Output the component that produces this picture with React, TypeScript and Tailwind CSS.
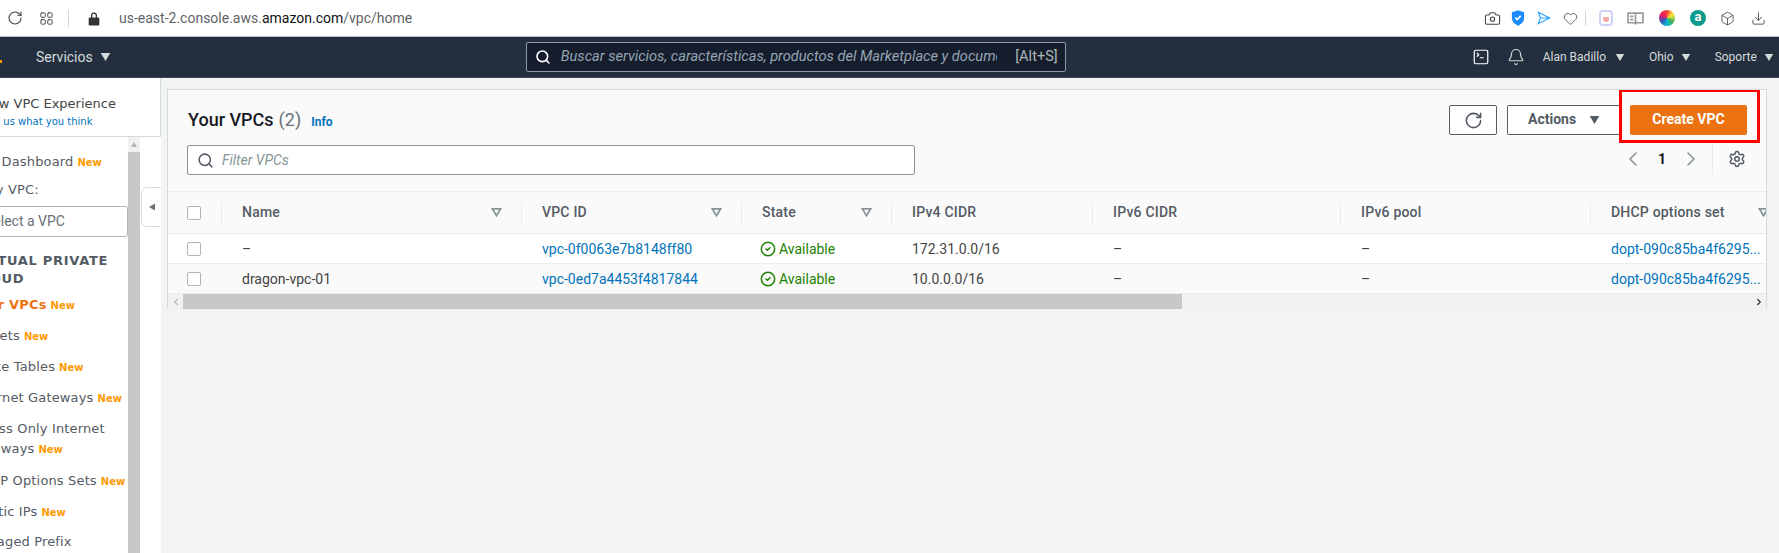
import React from 'react';
import {
  Bell,
  Box,
  Camera,
  ChevronLeft,
  ChevronRight,
  CircleCheck,
  Download,
  Heart,
  LayoutGrid,
  RotateCw,
  Search,
  Settings,
  SquareTerminal,
} from 'lucide-react';

const Tri: React.FC<{ className?: string }> = ({ className }) => (
  <svg viewBox="0 0 12 10" className={className} fill="currentColor">
    <path d="M0 0h12L6 10z" />
  </svg>
);

const SortIcon: React.FC = () => (
  <svg viewBox="0 0 12 10" className="w-[11px] h-[9px] text-[#879596] shrink-0" fill="none" stroke="currentColor" strokeWidth="2">
    <path d="M1.5 1h9L6 8.5z" />
  </svg>
);

const Check: React.FC = () => (
  <span className="block w-[14px] h-[14px] rounded-[2px] border border-[#aab7b8] bg-white" />
);

const New: React.FC = () => (
  <span className="ml-1 text-[10px] font-bold text-[#ff9900] tracking-normal">New</span>
);

const columns = [
  { label: 'Name', sort: true },
  { label: 'VPC ID', sort: true },
  { label: 'State', sort: true },
  { label: 'IPv4 CIDR', sort: false },
  { label: 'IPv6 CIDR', sort: false },
  { label: 'IPv6 pool', sort: false },
  { label: 'DHCP options set', sort: true },
];

const rows = [
  { name: '–', id: 'vpc-0f0063e7b8148ff80', cidr: '172.31.0.0/16', bg: 'bg-white' },
  { name: 'dragon-vpc-01', id: 'vpc-0ed7a4453f4817844', cidr: '10.0.0.0/16', bg: 'bg-[#fafafa]' },
];

const gridCols = 'grid grid-cols-[54px_300px_220px_150px_201px_248px_250px_198px]';

const Sidebar: React.FC = () => (
  <aside className="w-[161px] shrink-0 bg-white flex flex-col overflow-hidden h-[476px] font-['DejaVu_Sans',sans-serif] text-[#545b64]">
    <div className="h-[59px] shrink-0 border-b border-r border-[#d5dbdb] overflow-hidden pt-[16px]">
      <div className="-ml-[19px] whitespace-nowrap text-[13px] leading-[20px] text-[#444]">New VPC Experience</div>
      <div className="-ml-[16px] whitespace-nowrap text-[10px] leading-[16px] text-[#0073bb]">Tell us what you think</div>
    </div>
    <div className="flex flex-1 min-h-0 relative">
      <div className="w-[128px] shrink-0 overflow-hidden text-[13px] tracking-[0.15px]">
        <div className="-ml-[29px] w-[157px] pt-[15px]">
          <div className="h-[20px] leading-[20px] whitespace-nowrap">VPC Dashboard<New /></div>
          <div className="mt-[8px] -ml-[21px] h-[20px] leading-[20px] whitespace-nowrap">Filter by VPC:</div>
          <div className="mt-[6px] h-[31px] w-[157px] border border-[#aab7b8] rounded-[3px] pl-[13px] leading-[28px] text-[#687078] font-['Roboto',sans-serif] text-[14px] tracking-normal">Select a VPC</div>
          <div className="mt-[15px] leading-[18px] font-bold tracking-[0.7px] text-[#545b64]">VIRTUAL PRIVATE CLOUD</div>
          <div className="mt-[7px] h-[20px] leading-[20px] whitespace-nowrap font-bold text-[#ec7211]">Your VPCs<New /></div>
          <div className="mt-[11px] -ml-[5px] h-[20px] leading-[20px] whitespace-nowrap">Subnets<New /></div>
          <div className="mt-[11px] h-[20px] leading-[20px] whitespace-nowrap">Route Tables<New /></div>
          <div className="mt-[11px] h-[20px] leading-[20px] whitespace-nowrap">Internet Gateways<New /></div>
          <div className="mt-[11px] -ml-[2px] leading-[20px]">Egress Only Internet Gateways<New /></div>
          <div className="mt-[11px] h-[20px] leading-[20px] whitespace-nowrap">DHCP Options Sets<New /></div>
          <div className="mt-[11px] h-[20px] leading-[20px] whitespace-nowrap">Elastic IPs<New /></div>
          <div className="mt-[10px] -ml-[2px] w-[130px] leading-[20px]">Managed Prefix Lists</div>
        </div>
      </div>
      <div className="w-[12px] shrink-0 bg-[#c8c8c8] flex flex-col">
        <div className="h-[15px] bg-[#f1f1f1] flex items-center justify-center text-[#b5b5b5]">
          <Tri className="w-[8px] h-[5px] rotate-180" />
        </div>
      </div>
      <div className="absolute left-[141px] top-[50px] w-[21px] h-[40px] bg-white border border-[#d5dbdb] rounded-l-[6px] flex items-center justify-center text-[#687078]">
        <Tri className="w-[10px] h-[6px] rotate-90" />
      </div>
    </div>
  </aside>
);

const App: React.FC = () => {
  return (
    <div className="w-[1779px] h-[553px] overflow-hidden bg-[#f2f3f3] flex flex-col font-['Roboto',sans-serif]">
      {/* browser toolbar */}
      <div className="h-[37px] shrink-0 bg-white border-b border-[#b8c0c4] flex items-center text-[#444]">
        <RotateCw className="ml-[7px] w-[16px] h-[16px]" strokeWidth={1.6} />
        <LayoutGrid className="ml-[16px] w-[15px] h-[15px]" strokeWidth={1.5} />
        <div className="ml-[14px] w-px h-[17px] bg-[#d5d5d5]" />
        <svg viewBox="0 0 12 14" className="ml-[19px] w-[12px] h-[15px] text-[#333]" fill="currentColor">
          <path d="M3 6V4a3 3 0 0 1 6 0v2h1.500a.8.8 0 0 1 .8.8v6.400a.8.8 0 0 1-.8.8h-9a.8.8 0 0 1-.8-.8V6.800a.8.8 0 0 1 .8-.8zm1.300 0h3.400V4a1.700 1.700 0 0 0-3.400 0z" />
        </svg>
        <div className="ml-[19px] text-[14px] text-[#5f6368] whitespace-nowrap">
          us-east-2.console.aws.<span className="text-[#111]">amazon.com</span>/vpc/home
        </div>
        <div className="ml-auto flex items-center mr-[13px]">
          <Camera className="w-[17px] h-[17px]" strokeWidth={1.5} />
          <svg viewBox="0 0 16 18" className="ml-[10px] w-[14px] h-[16px]">
            <path d="M8 0l7 2.500v6c0 4.500-3 7.500-7 9.500-4-2-7-5-7-9.500v-6z" fill="#1a8cff" />
            <path d="M4.800 8.500l2.300 2.300 4-4.200" fill="none" stroke="#fff" strokeWidth="1.800" />
          </svg>
          <svg viewBox="0 0 16 16" className="ml-[12px] w-[14px] h-[14px] text-[#2aa3ff]" fill="none" stroke="currentColor" strokeWidth="1.300">
            <path d="M1.500 1.500l13 6.500-13 6.500 2.500-6.500zM4 8h10" />
          </svg>
          <Heart className="ml-[12px] w-[15px] h-[15px]" strokeWidth={1.3} />
          <div className="ml-[7px] w-px h-[15px] bg-[#d5d5d5]" />
          <div className="ml-[13px] w-[14px] h-[16px] rounded-[4px] border-2 border-[#cfd2f7] flex items-end justify-center">
            <span className="w-[6px] h-[5px] mb-[2px] rounded-b-[3px] bg-[#f7a8a8]" />
          </div>
          <svg viewBox="0 0 16 12" className="ml-[14px] w-[17px] h-[13px] text-[#9a9a9a]" fill="none" stroke="currentColor" strokeWidth="1.600">
            <path d="M1 1h14v9H9l-1 1-1-1H1zM8 2v8M3 4h3M3 7h3" />
          </svg>
          <div className="ml-[15px] w-[16px] h-[16px] rounded-full bg-[conic-gradient(#f44336,#ffeb3b,#4caf50,#00bcd4,#3f51b5,#e91e63,#f44336)]" />
          <div className="ml-[15px] w-[16px] h-[16px] rounded-full bg-[#0d9a8c] text-white text-[13px] leading-[14px] font-bold text-center">a</div>
          <Box className="ml-[14px] w-[15px] h-[15px]" strokeWidth={1.3} />
          <Download className="ml-[16px] w-[15px] h-[15px]" strokeWidth={1.4} />
        </div>
      </div>

      {/* aws nav */}
      <div className="h-[41px] shrink-0 bg-[#232f3e] border-b border-[#3b4754] flex items-center text-[#d5dbdb] text-[13px]">
        <span className="w-[2px] h-[3px] bg-[#ff9900] self-end mb-[14px]" />
        <span className="ml-[34px] text-[14px] leading-none">Servicios</span>
        <Tri className="ml-[7px] w-[11px] h-[8px]" />
        <div className="ml-[415px] w-[540px] h-[30px] border border-[#8d99a8] rounded-[2px] bg-[#161e2d] flex items-center pl-[8px] pr-[7px]">
          <Search className="w-[16px] h-[16px] text-white" strokeWidth={2.4} />
          <div className="ml-[10px] w-[436px] overflow-hidden whitespace-nowrap italic text-[#95a5b3] text-[14.6px]">
            Buscar servicios, características, productos del Marketplace y documentos
          </div>
          <span className="ml-auto text-[#aab7b8] text-[14.6px] whitespace-nowrap">[Alt+S]</span>
        </div>
        <SquareTerminal className="ml-[406px] w-[18px] h-[18px] text-white" strokeWidth={1.6} />
        <Bell className="ml-[17px] w-[18px] h-[18px]" strokeWidth={1.6} />
        <span className="ml-[18px] text-[12px] whitespace-nowrap">Alan Badillo</span>
        <Tri className="ml-[9px] w-[10px] h-[7px]" />
        <span className="ml-[24px] text-[12px]">Ohio</span>
        <Tri className="ml-[7px] w-[10px] h-[7px]" />
        <span className="ml-[24px] text-[12px]">Soporte</span>
        <Tri className="ml-[7px] w-[10px] h-[7px]" />
      </div>

      <div className="flex flex-1 min-h-0">
        <Sidebar />
        {/* vpc panel */}
        <div className="ml-[6px] mt-[11px] w-[1600px] h-[220px] relative bg-[#fafafa] border-l border-r border-t border-[#d5dbdb] overflow-hidden">
          <div className="h-[101px] pl-[19px] pr-[19px] flex flex-col">
            <div className="flex items-start pt-[15px]">
              <div className="pt-[1px] pl-[1px] flex items-baseline">
                <span className="text-[18px] font-medium text-[#16191f]">Your VPCs</span>
                <span className="ml-[5px] text-[18px] text-[#687078]">(2)</span>
                <span className="ml-[10px] text-[12px] font-bold text-[#0073bb]">Info</span>
              </div>
              <div className="ml-auto flex items-center">
                <button className="w-[48px] h-[30px] border border-[#545b64] rounded-[2px] bg-white flex items-center justify-center text-[#545b64]">
                  <RotateCw className="w-[19px] h-[19px]" strokeWidth={2} />
                </button>
                <button className="ml-[10px] w-[114px] h-[30px] border border-[#545b64] rounded-[2px] bg-white flex items-center pl-[20px] pb-[1px] text-[#545b64] text-[14px] font-bold">
                  Actions
                  <Tri className="ml-[13px] w-[11px] h-[8px]" />
                </button>
                <button className="ml-[9px] w-[117px] h-[30px] pb-[1px] rounded-[2px] bg-[#ec7211] text-white text-[14px] font-bold">
                  Create VPC
                </button>
              </div>
            </div>
            <div className="flex items-center mt-[10px]">
              <div className="w-[728px] h-[30px] border border-[#879596] rounded-[2px] bg-white flex items-center pl-[9px]">
                <Search className="w-[17px] h-[17px] text-[#545b64]" strokeWidth={2.2} />
                <span className="ml-[8px] italic text-[14px] text-[#879596]">Filter VPCs</span>
              </div>
              <div className="ml-auto flex items-center text-[#879596] -mt-[2px]">
                <ChevronLeft className="w-[24px] h-[24px]" strokeWidth={1.6} />
                <span className="ml-[12px] w-[10px] text-[14px] font-bold text-[#16191f] text-center">1</span>
                <ChevronRight className="ml-[12px] w-[24px] h-[24px]" strokeWidth={1.6} />
                <div className="ml-[9px] w-px h-[30px] bg-[#eaeded]" />
                <Settings className="ml-[15px] mr-[1px] w-[18px] h-[18px] text-[#545b64]" strokeWidth={2} />
              </div>
            </div>
          </div>

          <div className="border-t border-[#eaeded] text-[14px] w-[1621px]">
            <div className={`${gridCols} h-[42px] border-b border-[#eaeded] items-center text-[#545b64] font-medium tracking-[0.2px]`}>
              <div className="pl-[19px] h-[22px] border-r border-[#eaeded] flex items-center"><Check /></div>
              {columns.map((col) => (
                <div key={col.label} className="pl-[20px] pr-[19px] h-[22px] border-r border-[#eaeded] flex items-center justify-between whitespace-nowrap">
                  {col.label}
                  {col.sort && <SortIcon />}
                </div>
              ))}
            </div>
            {rows.map((row) => (
              <div key={row.id} className={`${gridCols} ${row.bg} h-[30px] border-b border-[#eaeded] items-center text-[#16191f]`}>
                <div className="pl-[19px]"><Check /></div>
                <div className="pl-[20px] pt-[1px] text-[#444]">{row.name}</div>
                <div className="pl-[20px] pt-[1px] text-[#0073bb]">{row.id}</div>
                <div className="pl-[18px] pt-[1px] flex items-center text-[#1d8102]">
                  <CircleCheck className="w-[16px] h-[16px]" strokeWidth={2.2} />
                  <span className="ml-[3px]">Available</span>
                </div>
                <div className="pl-[20px] pt-[1px] text-[#444]">{row.cidr}</div>
                <div className="pl-[20px] pt-[1px] text-[#444]">–</div>
                <div className="pl-[20px] pt-[1px] text-[#444]">–</div>
                <div className="pl-[20px] pt-[1px] text-[#0073bb] whitespace-nowrap overflow-hidden">dopt-090c85ba4f6295...</div>
              </div>
            ))}
          </div>

          {/* horizontal scrollbar */}
          <div className="h-[16px] bg-[#f1f1f1] flex items-center">
            <div className="w-[15px] flex justify-center text-[#b5b5b5]">
              <ChevronLeft className="w-[10px] h-[10px]" strokeWidth={3} />
            </div>
            <div className="w-[999px] h-full bg-[#c8c8c8]" />
            <div className="ml-auto w-[15px] flex justify-center text-[#333]">
              <ChevronRight className="w-[10px] h-[10px]" strokeWidth={3} />
            </div>
          </div>

          {/* annotation drawn over the screenshot */}
          <div className="absolute left-[1451px] -top-[1px] w-[141px] h-[54px] border-[3px] border-[#ff0000]" />
        </div>
      </div>
    </div>
  );
};

export default App;
